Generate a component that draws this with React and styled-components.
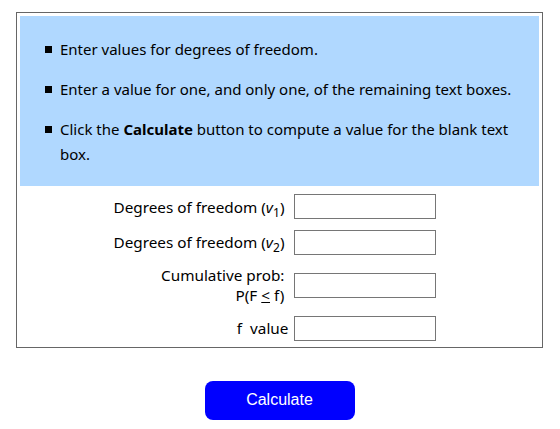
import React from 'react';
import styled, { createGlobalStyle } from 'styled-components';

const GlobalStyle = createGlobalStyle`
  body {
    margin: 0;
    background: #fff;
    font-family: "Noto Sans", "Open Sans", sans-serif;
    color: #000;
  }
`;

export default function App() {
  return (
    <>
      <GlobalStyle />
      <Page>
        <Panel>
          <Instructions>
            <li><span>Enter values for degrees of freedom.</span></li>
            <li><span>Enter a value for one, and only one, of the remaining text boxes.</span></li>
            <li>
              <span>
                Click the <b>Calculate</b> button to compute a value for the blank text box.
              </span>
            </li>
          </Instructions>
          <Form>
            <Label>
              Degrees of freedom (<i>v</i><sub>1</sub>)
            </Label>
            <Field type="text" />
            <Label>
              Degrees of freedom (<i>v</i><sub>2</sub>)
            </Label>
            <Field type="text" />
            <Label>
              Cumulative prob:
              <br />
              P(F <u>&lt;</u> f)
            </Label>
            <Field type="text" />
            <Label $tight>f&nbsp; value</Label>
            <Field type="text" />
          </Form>
        </Panel>
        <CalcButton type="button">Calculate</CalcButton>
      </Page>
    </>
  );
}

const Page = styled.div`
  display: flex;
  flex-direction: column;
  align-items: center;
  padding: 12px 17px 0 16px;
`;

const Panel = styled.div`
  box-sizing: border-box;
  width: 527px;
  border: 1px solid #666;
  padding: 3px 3px 6px;
`;

const Instructions = styled.ul`
  margin: 0;
  background: #b0d8ff;
  list-style: none;
  padding: 21px 20px 19px 25px;
  font-size: 15px;
  line-height: 25px;

  li {
    display: grid;
    grid-template-columns: 15px 1fr;
    align-items: start;
  }

  li + li {
    margin-top: 15px;
  }

  li::before {
    content: '';
    width: 7px;
    height: 7px;
    margin-top: 9px;
    background: #000;
  }

  b {
    font-weight: 700;
  }
`;

const Form = styled.div`
  display: grid;
  grid-template-columns: auto 142px;
  grid-auto-rows: minmax(25px, auto);
  column-gap: 6px;
  row-gap: 10.5px;
  justify-content: center;
  align-items: center;
  padding: 8px 9px 0 0;
  font-size: 15.3px;
`;

const Label = styled.div`
  text-align: right;
  line-height: 20px;
  padding-right: ${(p) => (p.$tight ? '0' : '4px')};

  sub {
    font-size: 12px;
    line-height: 0;
  }
`;

const Field = styled.input`
  box-sizing: border-box;
  width: 142px;
  height: 25px;
  border: 1px solid #767676;
  border-radius: 0;
  padding: 1px 3px;
  font: 14px "Noto Sans", sans-serif;
  outline: none;
`;

const CalcButton = styled.button`
  margin-top: 33px;
  width: 150px;
  height: 39px;
  border: none;
  border-radius: 8px;
  background: #0000ff;
  color: #fff;
  font-family: "Liberation Sans", Arial, sans-serif;
  font-size: 16px;
  cursor: pointer;
`;
